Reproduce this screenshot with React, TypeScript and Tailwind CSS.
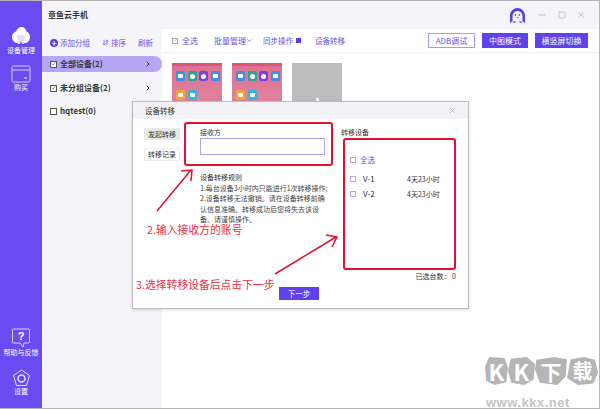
import { ChevronDown, ChevronRight, Check, Minus, Square, X, ArrowDownUp } from "lucide-react";

const cjk = { fontFamily: '"Noto Sans CJK SC", "Noto Sans", sans-serif' };

const apps = [
  { color: "#3d8fe8", round: false },
  { color: "#2aa58e", round: true },
  { color: "#7a3fe0", round: true },
  { color: "#3d8fe8", round: false },
  { color: "#f0a52e", round: false },
  { color: "#35b6d8", round: false },
];

function Phone() {
  return (
    <div className="w-[50px] h-[60px] bg-gradient-to-b from-[#e0708f] to-[#dc8cab]">
      <div className="h-[3px] bg-[#d9557a]" />
      <div className="grid grid-cols-4 gap-x-[3px] gap-y-[9px] pl-[4px] pr-[3px] pt-[5px]">
        {apps.map((app, i) => (
          <div key={i} className="w-[9px] h-[10px] rounded-[2px] flex items-center justify-center" style={{ background: app.color }}>
            <div className={app.round ? "w-[5px] h-[5px] rounded-full bg-white" : "w-[5px] h-[4px] rounded-[1px] bg-white"} />
          </div>
        ))}
      </div>
    </div>
  );
}

function Box({ checked, className = "" }: { checked?: boolean; className?: string }) {
  return (
    <span className={`w-[7px] h-[7px] border border-[#555] bg-white flex items-center justify-center shrink-0 ${className}`}>
      {checked && <Check size={6} strokeWidth={3} className="text-[#444]" />}
    </span>
  );
}

function GroupRow({ label, checked, active, chevron = true }: { label: string; checked?: boolean; active?: boolean; chevron?: boolean }) {
  return (
    <div className={`h-[16px] flex items-center pl-[8px] pr-[10px] gap-[3px] rounded-r-[8px] ${active ? "bg-[#b7a6f6]" : ""}`}>
      <Box checked={checked} />
      <span className="text-[8px] font-bold text-[#333] leading-none">{label}</span>
      {chevron && <ChevronRight size={8} strokeWidth={3} className="ml-auto text-[#333]" />}
    </div>
  );
}

function DeviceRow({ name }: { name: string }) {
  return (
    <div className="flex items-center h-[15px] text-[7px] text-[#333]">
      <span className="w-[6px] h-[6px] border border-[#b5abe6] shrink-0" />
      <span className="ml-[7px] w-[44px] text-[8px]">{name}</span>
      <span>4天23小时</span>
    </div>
  );
}

function NavItem({ icon, label }: { icon: React.ReactNode; label: string }) {
  return (
    <div className="flex flex-col items-center text-white text-[7px] leading-none gap-[1px]">
      {icon}
      <span>{label}</span>
    </div>
  );
}

function Stone({ ch, className }: { ch: string; className: string }) {
  return (
    <span className={`h-[28px] bg-[#b5b5b5] text-white font-bold flex items-center justify-center leading-none ${className}`}>{ch}</span>
  );
}

export default function App() {
  return (
    <div style={cjk} className="relative w-[600px] h-[409px] flex overflow-hidden bg-white border-t border-r border-b border-[#b5b5b5]">
      {/* sidebar */}
      <div className="w-[42px] shrink-0 bg-[#6a4bf2] flex flex-col items-center pt-[26px] pb-[13px]">
        <NavItem
          label="设备管理"
          icon={
            <svg width="18" height="19" viewBox="0 0 18 19">
              <path d="M4 16C1.500 15 0 12.500 0 10c0-3 2-5 4-5.500C5 2 7 0 9.500 0 12 0 14 2 14.500 4.500 16.500 5 18 7.500 18 10c0 3-2 5.500-4 6l-2 0 0-5H6l0 5z" fill="#fff" />
              <path d="M5 8h8v3l-1 6h-2l-1-3-1 3H6l-1-6z" fill="#e6e0fb" />
            </svg>
          }
        />
        <div className="h-[11px]" />
        <NavItem
          label="购买"
          icon={
            <svg width="20" height="18" viewBox="0 0 20 18" fill="none" stroke="#d9d0fb" strokeWidth="1">
              <rect x="1" y="1" width="18" height="16" rx="1.500" />
              <path d="M1 5h18" />
              <path d="M13 13h3" stroke="#fff" />
            </svg>
          }
        />
        <div className="mt-auto" />
        <NavItem
          label="帮助与反馈"
          icon={
            <svg width="20" height="20" viewBox="0 0 20 20" fill="none" stroke="#d9d0fb" strokeWidth="1">
              <path d="M2.500 1h15a1 1 0 0 1 1 1v12a1 1 0 0 1-1 1H13l-1 4-3-4H2.500a1 1 0 0 1-1-1V2a1 1 0 0 1 1-1z" />
              <text x="10" y="12" textAnchor="middle" fontSize="11" fontWeight="700" fill="#fff" stroke="none" fontFamily="Liberation Sans, sans-serif">?</text>
            </svg>
          }
        />
        <div className="h-[13px]" />
        <NavItem
          label="设置"
          icon={
            <svg width="19" height="18" viewBox="0 0 19 18" fill="none" stroke="#e6e0fb" strokeWidth="1">
              <path d="M9.500 1l8 5.500-3 10h-10l-3-10z" />
              <circle cx="9.500" cy="9.500" r="3.500" strokeWidth="1.500" />
            </svg>
          }
        />
      </div>

      <div className="flex-1 flex flex-col min-w-0">
        {/* title bar */}
        <div className="h-[28px] bg-[#f5f5f9] flex items-center pl-[6px] pr-[13px]">
          <span className="text-[8px] font-bold text-[#333]">章鱼云手机</span>
          <svg className="ml-auto" width="17" height="17" viewBox="0 0 17 17">
            <path d="M1 16V8.500a7.500 7.500 0 0 1 15 0V16l-2-1.500-2 1.500-3.500-1.500L5 16l-2-1.500z" fill="#5b3fe6" />
            <path d="M3.500 15V9a5 5 0 0 1 10 0v6l-2-.5-3 .5-3-.5z" fill="#f2effd" />
            <circle cx="6.500" cy="8" r="0.800" fill="#333" />
            <circle cx="10.500" cy="8" r="0.800" fill="#333" />
            <path d="M7.500 10.500h2" stroke="#333" strokeWidth="0.600" />
          </svg>
          <Minus size={10} className="ml-[11px] text-[#b5b5b5]" />
          <Square size={8} className="ml-[11px] text-[#b5b5b5]" />
          <X size={10} className="ml-[10px] text-[#b5b5b5]" />
        </div>

        <div className="flex-1 flex min-h-0">
          {/* groups */}
          <div className="w-[120px] shrink-0 bg-[#f5f5f9]">
            <div className="h-[27px] flex items-center pl-[8px] text-[7.500px] text-[#6a50e8]">
              <span className="w-[8px] h-[8px] rounded-full bg-[#5b3fe6] text-white text-[8px] leading-[8px] text-center font-bold">+</span>
              <span className="ml-[2px]">添加分组</span>
              <ArrowDownUp size={7} strokeWidth={2.500} className="ml-[12px]" />
              <span className="ml-[2px]">排序</span>
              <span className="ml-[12px]">刷新</span>
            </div>
            <GroupRow label="全部设备(2)" checked active />
            <div className="h-[8px]" />
            <GroupRow label="未分组设备(2)" checked />
            <div className="h-[7px]" />
            <GroupRow label="hqtest(0)" chevron={false} />
          </div>

          {/* device area */}
          <div className="flex-1 min-w-0 bg-white">
            <div className="h-[24px] flex items-center pl-[10px] pr-[11px] border-b border-[#efeff3] text-[8px] text-[#6a50e8]">
              <span className="w-[6px] h-[6px] border border-[#a9a9b5] flex items-center justify-center">
                <Check size={5} strokeWidth={3} className="text-[#888]" />
              </span>
              <span className="ml-[4px]">全选</span>
              <span className="ml-[16px]">批量管理</span>
              <ChevronDown size={7} strokeWidth={2.500} />
              <span className="ml-[10px] text-[7.500px]">同步操作</span>
              <span className="ml-[3px] w-[5px] h-[5px] bg-[#5b3fe6]" />
              <span className="ml-[14px] text-[7.500px]">设备转移</span>
              <span className="ml-auto w-[47px] h-[15px] border border-[#a898f2] flex items-center justify-center text-[#6a50e8]">ADB调试</span>
              <span className="ml-[7px] w-[46px] h-[15px] bg-[#5f41ee] text-white flex items-center justify-center">中图模式</span>
              <span className="ml-[7px] w-[53px] h-[15px] bg-[#5f41ee] text-white flex items-center justify-center">横竖屏切换</span>
            </div>
            <div className="flex gap-[10px] pl-[10px] pt-[10px]">
              <Phone />
              <Phone />
              <div className="w-[50px] h-[60px] bg-[#bdbdbd] flex justify-center">
                <span className="mt-[35px] w-[3px] h-[3px] rounded-full bg-white" />
              </div>
            </div>
          </div>
        </div>
      </div>

      {/* transfer dialog */}
      <div className="absolute left-[132px] top-[100px] w-[337px] h-[208px] bg-white border border-[#bdbdbd] shadow-[0_1px_3px_rgba(0,0,0,0.15)] flex flex-col text-[#333]">
        <div className="h-[17px] shrink-0 bg-[#f3f3f7] flex items-center pl-[12px] pr-[11px] text-[7.500px]">
          <span>设备转移</span>
          <X size={9} className="ml-auto text-[#b0b0b0]" />
        </div>
        <div className="flex-1 flex min-h-0 relative">
          <div className="w-[48px] ml-[11px] pt-[9px] shrink-0 flex flex-col gap-[8px] text-[7px]">
            <div className="w-[36px] h-[12px] bg-[#e8e8e8] flex items-center justify-center">发起转移</div>
            <div className="w-[36px] h-[13px] border border-[#ececec] flex items-center justify-center">转移记录</div>
          </div>
          <div className="w-[141px] ml-[8px] pt-[8px] text-[7px] leading-[10px]">
            <div>接收方</div>
            <div className="mt-[1px] w-[125px] h-[17px] border border-[#b0a5e8]" />
            <div className="mt-[17px]">设备转移规则</div>
            <div className="mt-[1px] w-[130px] text-[#444] leading-[10.300px]">
              1.每台设备3小时内只能进行1次转移操作;<br />
              2.设备转移无法撤销。请在设备转移前确<br />
              认信息准确。转移成功后您将失去该设<br />
              备。请谨慎操作。
            </div>
          </div>
          <div className="pt-[8px] flex-1 text-[7px] leading-[10px]">
            <div>转移设备</div>
            <div className="mt-[16px] ml-[9px]">
              <div className="flex items-center h-[14px]">
                <span className="w-[6px] h-[6px] border border-[#b5abe6]" />
                <span className="ml-[4px] text-[7.500px] text-[#6a50e8]">全选</span>
              </div>
              <div className="mt-[4px]">
                <DeviceRow name="V-1" />
                <DeviceRow name="V-2" />
              </div>
            </div>
            <div className="absolute right-[12px] bottom-[27px]">已选台数： 0</div>
          </div>
          <div className="absolute left-[146px] bottom-[8px] w-[40px] h-[13px] bg-[#5f41ee] text-white text-[7.500px] flex items-center justify-center">下一步</div>
        </div>
      </div>

      {/* red annotations over the dialog */}
      <div className="absolute left-[184px] top-[121px] w-[149px] h-[44px] border-2 border-[#e0102f] rounded-[3px]" />
      <div className="absolute left-[343px] top-[137px] w-[113px] h-[132px] border-2 border-[#e0102f] rounded-[3px]" />
      <svg className="absolute left-[130px] top-[159px]" width="220" height="120" viewBox="0 0 220 120" fill="none" stroke="#e0102f" strokeWidth="1.500">
        <path d="M27 51L61 10M51 11l11-1-1 11" />
        <path d="M145 114l61-37M196 75l11 2-5 10" />
      </svg>
      <div className="absolute left-[147px] top-[222px] text-[10.800px] leading-[12px] text-[#ee3148]">2.输入接收方的账号</div>
      <div className="absolute left-[136px] top-[277px] text-[10.800px] leading-[12px] text-[#ee3148]">3.选择转移设备后点击下一步</div>

      {/* watermark */}
      <div className="absolute left-[485px] top-[356px] flex">
        <Stone ch="K" className="w-[23px] text-[23px] [clip-path:polygon(18%_0,85%_4%,100%_40%,92%_90%,40%_100%,5%_85%,0_35%)]" />
        <Stone ch="K" className="w-[27px] text-[23px] [clip-path:polygon(10%_6%,70%_0,100%_25%,95%_80%,60%_100%,12%_92%,0_50%)]" />
        <Stone ch="下" className="w-[32px] text-[21px] [clip-path:polygon(4%_10%,60%_0,100%_8%,96%_70%,70%_100%,15%_92%,0_45%)]" />
        <Stone ch="载" className="w-[31px] text-[20px] [clip-path:polygon(12%_8%,55%_0,90%_10%,100%_55%,85%_95%,35%_100%,0_75%)]" />
      </div>
      <div style={{ fontFamily: '"Liberation Sans", sans-serif' }} className="absolute left-[486px] top-[394px] text-[13px] leading-[15px] font-bold tracking-[0.500px] text-[#c4c4c4]">www.kkx.net</div>
    </div>
  );
}
